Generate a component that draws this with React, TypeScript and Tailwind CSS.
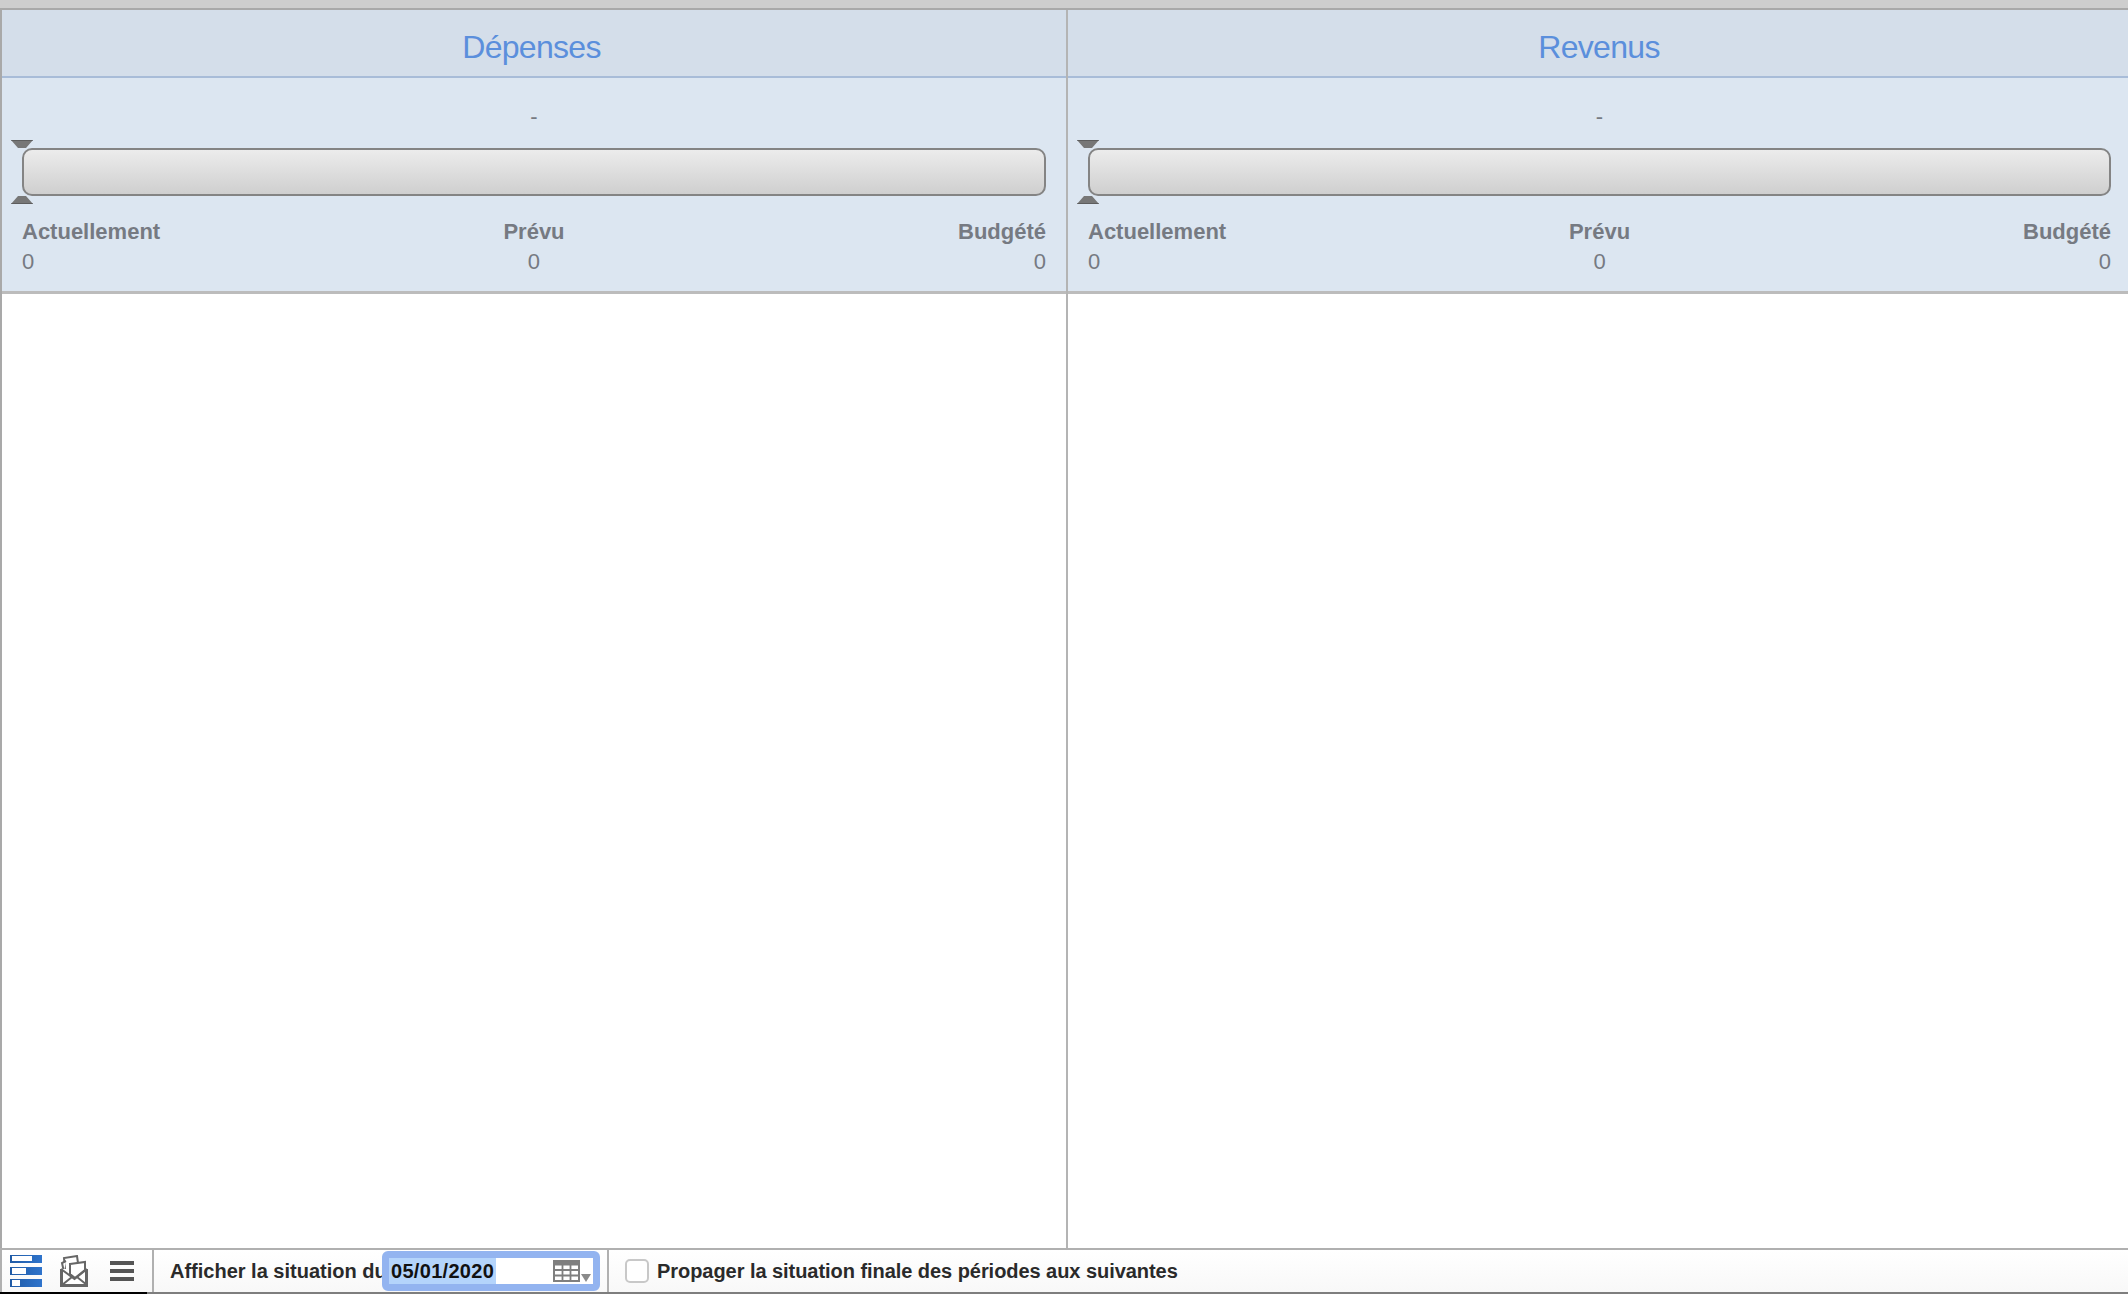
import React from "react";

const font = "font-['Liberation_Sans',Arial,sans-serif]";

function RangeMarker({ flip }: { flip?: boolean }) {
  return (
    <svg width="22" height="8" viewBox="0 0 22 8" className="block">
      <path
        d={flip ? "M0 8 L22 8 L15 0 L7 0 Z" : "M0 0 L22 0 L15 8 L7 8 Z"}
        fill="#777"
      />
      <path d={flip ? "M0 8 L22 8" : "M0 0 L22 0"} stroke="#444" strokeWidth="1" />
    </svg>
  );
}

function Gauge() {
  return (
    <div className="relative">
      <div className="h-[48px] rounded-[10px] border-2 border-[#848484] bg-gradient-to-b from-[#ececec] to-[#cfcfcf]" />
      {/* little arrows sitting over the corner of the bar */}
      <div className="absolute left-[-11px] top-[-8px]">
        <RangeMarker />
      </div>
      <div className="absolute left-[-11px] bottom-[-8px]">
        <RangeMarker flip />
      </div>
    </div>
  );
}

function Stat({ label, align }: { label: string; align: string }) {
  return (
    <div className={align}>
      <div className="text-[22px] leading-[30px] font-bold text-[#767a82]">{label}</div>
      <div className="text-[22px] leading-[30px] text-[#767a82]">0</div>
    </div>
  );
}

function Column({ title, last }: { title: string; last?: boolean }) {
  return (
    <div className={`flex flex-col min-w-0 ${last ? "" : "border-r-2 border-[#b4b4b4]"}`}>
      <div className={`h-[68px] flex items-center justify-center border-b-2 border-[#a8bcd8] bg-[#d4deea] pt-[8px] ${last ? "pl-[2px]" : "pr-[5px]"}`}>
        <span className="text-[32px] text-[#5b8fdc] tracking-[-0.7px]">{title}</span>
      </div>
      <div className={`h-[216px] border-b-[3px] border-[#bcbcbc] bg-[#dce6f1] pl-[20px] ${last ? "pr-[17px]" : "pr-[20px]"}`}>
        <div className="h-[70px] pt-[24px] text-center text-[22px] leading-[30px] text-[#767a82]">-</div>
        <Gauge />
        <div className="mt-[21px] grid grid-cols-3">
          <Stat label="Actuellement" align="text-left" />
          <Stat label="Prévu" align="text-center" />
          <Stat label="Budgété" align="text-right" />
        </div>
      </div>
      <div className="flex-1 bg-white" />
    </div>
  );
}

function BarsIcon() {
  return (
    <svg width="33" height="32" viewBox="0 0 33 32" className="block">
      <defs>
        <linearGradient id="barFill" x1="0" x2="1" y1="0" y2="0">
          <stop offset="0" stopColor="#1f5aa5" />
          <stop offset="1" stopColor="#2f74cc" />
        </linearGradient>
      </defs>
      <rect x="0" y="0" width="32" height="8" fill="url(#barFill)" />
      <rect x="2" y="1" width="20" height="5" fill="#fff" />
      <rect x="0" y="12" width="32" height="8" fill="url(#barFill)" />
      <rect x="2" y="13" width="14" height="6" fill="#fff" />
      <rect x="0" y="24" width="32" height="8" fill="url(#barFill)" />
      <rect x="2" y="25" width="8" height="6" fill="#fff" />
    </svg>
  );
}

function MailIcon() {
  return (
    <svg width="28" height="32" viewBox="0 0 28 32" className="block" fill="none" stroke="#666">
      <path d="M5 14 L4 3 L17 1 L18 8" strokeWidth="2" fill="#fff" />
      <path d="M6 6 L2 8 L4 17" strokeWidth="2" fill="#fff" />
      <path d="M1.5 14 V30.5 H26.5 V14" strokeWidth="3" fill="#fff" />
      <path d="M10 9 L25 7 L25 15 L15 23 L10 19 Z" strokeWidth="2" fill="#fff" />
      <path d="M1 14 L14.5 24 L27 14" strokeWidth="2" />
      <path d="M2 30 L12 22 M27 30 L17 22" strokeWidth="2" />
    </svg>
  );
}

function MenuIcon() {
  return (
    <svg width="24" height="20" viewBox="0 0 24 20" className="block">
      <rect x="0" y="0" width="24" height="4" fill="#555" />
      <rect x="0" y="8" width="24" height="4" fill="#555" />
      <rect x="0" y="16" width="24" height="4" fill="#555" />
    </svg>
  );
}

function CalendarIcon() {
  return (
    <svg width="38" height="23" viewBox="0 0 38 23" className="block">
      <rect x="1" y="1" width="25" height="20" fill="#fff" stroke="#7f7f7f" strokeWidth="2" />
      <path d="M1 3.5 H26 " stroke="#7f7f7f" strokeWidth="4" fill="none" />
      <path d="M1 10 H26 M1 15.5 H26 M9.5 4 V21 M17.5 4 V21" stroke="#7f7f7f" strokeWidth="1.8" fill="none" />
      <path d="M28 14 L38 14 L33 22 Z" fill="#8a8a8a" />
    </svg>
  );
}

export default function App() {
  return (
    <div className={`${font} flex h-[1294px] w-[2128px] flex-col overflow-hidden bg-white`}>
      {/* window chrome strip */}
      <div className="h-[10px] shrink-0 border-b-2 border-[#a9a9a9] bg-[#cecece]" />

      {/* two budget columns */}
      <div className="grid flex-1 grid-cols-[1066px_1fr] border-l-2 border-[#a9a9a9] min-h-0">
        <Column title="Dépenses" />
        <Column title="Revenus" last />
      </div>

      {/* bottom toolbar */}
      <div className="relative flex h-[46px] shrink-0 items-stretch border-t-2 border-b-2 border-t-[#b0b0b0] border-b-[#7e7e7e] bg-gradient-to-b from-white to-[#f8f8f8] text-[20px] font-bold text-[#2a2a2a]">
        <div className="flex w-[154px] shrink-0 items-center border-l-2 border-r-2 border-[#b0b0b0] pl-[8px]">
          <BarsIcon />
          <div className="ml-[17px]">
            <MailIcon />
          </div>
          <div className="ml-[22px]">
            <MenuIcon />
          </div>
        </div>

        <div className="flex w-[455px] shrink-0 items-center border-r-2 border-[#b0b0b0] pl-[16px]">
          <span className="w-[212px] shrink-0 whitespace-nowrap">Afficher la situation du</span>
          <div className="flex h-[40px] w-[218px] shrink-0 items-center rounded-[6px] border-[7px] border-[#93b4f0] bg-white">
            <span className="flex h-[26px] w-[107px] items-center bg-[#b4d4fb] pl-[2px] text-[#111] tracking-[0.3px]">05/01/2020</span>
            <div className="ml-auto mr-[2px]">
              <CalendarIcon />
            </div>
          </div>
        </div>

        <div className="flex items-center pl-[16px]">
          <div className="h-[24px] w-[24px] rounded-[5px] border-2 border-[#c8c8c8] bg-white" />
          <span className="ml-[8px] whitespace-nowrap tracking-[-0.05px]">Propager la situation finale des périodes aux suivantes</span>
        </div>

        {/* dark edge of whatever sits behind the window */}
        <div className="absolute bottom-[-2px] left-0 h-[2px] w-[147px] bg-black" />
      </div>
    </div>
  );
}
